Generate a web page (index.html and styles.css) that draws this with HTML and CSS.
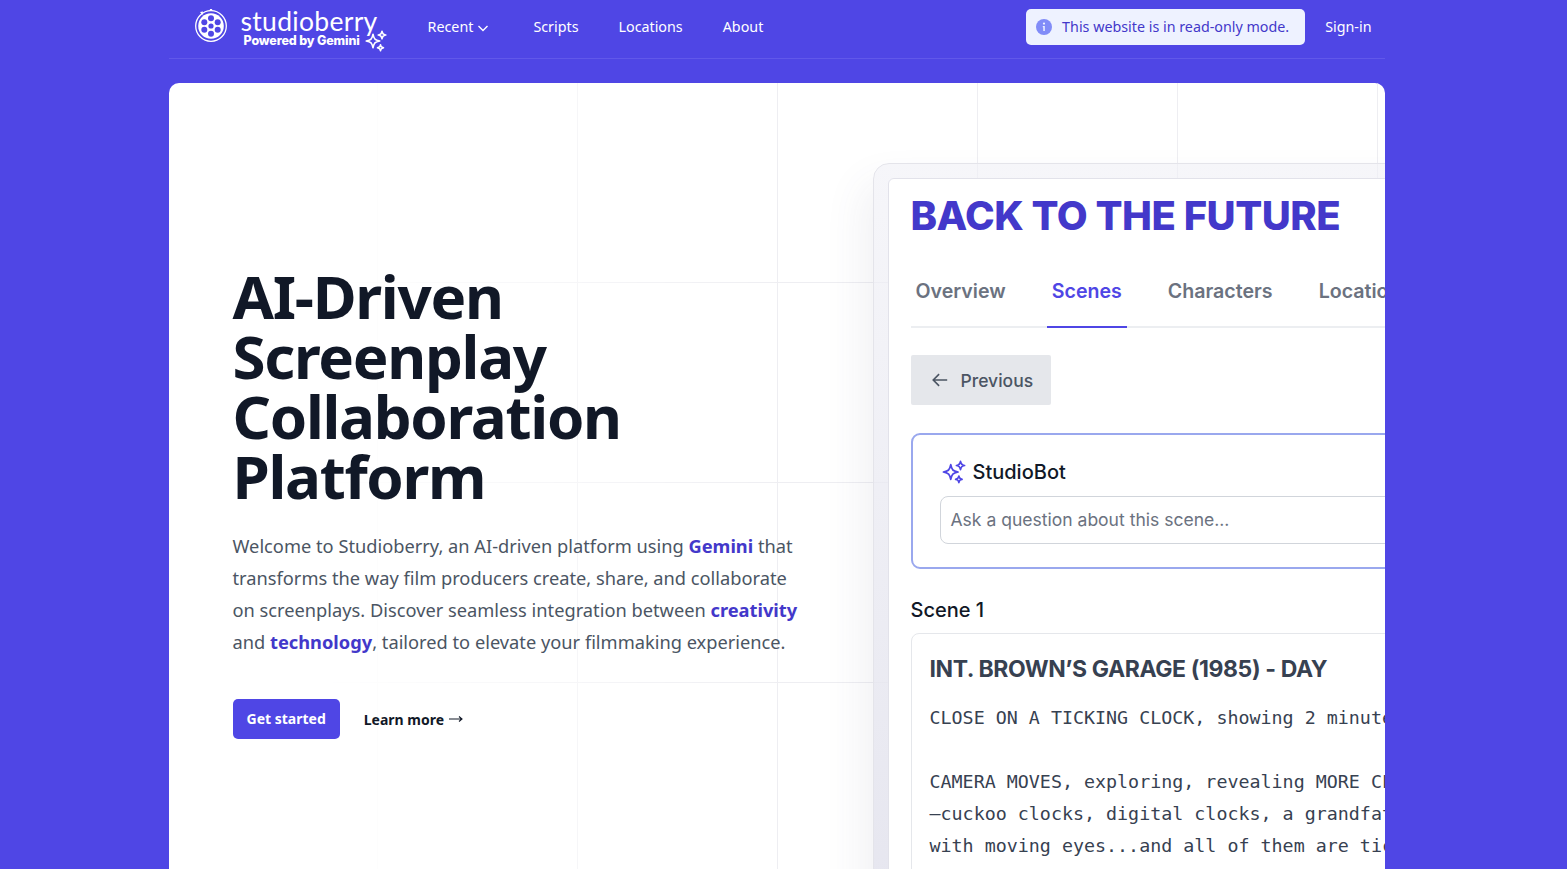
FILE: index.html
```html
<!DOCTYPE html>
<html lang="en">
<head>
  <meta charset="UTF-8">
  <meta name="viewport" content="width=device-width, initial-scale=1.0">
  <title>Studioberry</title>
  <link rel="stylesheet" href="styles.css">
</head>
<body>
  <svg class="defs" width="0" height="0" aria-hidden="true">
    <symbol id="sparkles" viewBox="0 0 24 24">
      <path fill="none" stroke="currentColor" stroke-width="1.6" stroke-linejoin="round" d="M9.813 15.904 9 18.75l-.813-2.846a4.5 4.5 0 0 0-3.09-3.09L2.25 12l2.846-.813a4.5 4.5 0 0 0 3.09-3.09L9 5.25l.813 2.846a4.5 4.5 0 0 0 3.09 3.09L15.75 12l-2.846.813a4.5 4.5 0 0 0-3.09 3.09Z"/>
      <path fill="none" stroke="currentColor" stroke-width="1.6" stroke-linejoin="round" d="M18.259 8.715 18 9.75l-.259-1.035a3.375 3.375 0 0 0-2.455-2.456L14.25 6l1.036-.259a3.375 3.375 0 0 0 2.455-2.456L18 2.25l.259 1.035a3.375 3.375 0 0 0 2.456 2.456L21.75 6l-1.035.259a3.375 3.375 0 0 0-2.456 2.456Z"/>
      <path fill="none" stroke="currentColor" stroke-width="1.6" stroke-linejoin="round" d="M16.894 20.567 16.5 21.75l-.394-1.183a2.25 2.25 0 0 0-1.423-1.423L13.5 18.75l1.183-.394a2.25 2.25 0 0 0 1.423-1.423l.394-1.183.394 1.183a2.25 2.25 0 0 0 1.423 1.423l1.183.394-1.183.394a2.25 2.25 0 0 0-1.423 1.423Z"/>
    </symbol>
  </svg>

  <div class="page">
    <!-- Header -->
    <header class="header">
      <a class="logo" href="#">
        <svg class="logo-reel" viewBox="0 0 32 32" fill="none">
          <circle cx="16" cy="16" r="15.300" stroke="white" stroke-width="1.300"/>
          <circle cx="16" cy="16" r="12.800" fill="white"/>
          <g fill="#4f46e5">
            <circle cx="16" cy="8.300" r="3"/>
            <circle cx="16" cy="23.700" r="3"/>
            <circle cx="9.300" cy="12.150" r="3"/>
            <circle cx="22.700" cy="12.150" r="3"/>
            <circle cx="9.300" cy="19.850" r="3"/>
            <circle cx="22.700" cy="19.850" r="3"/>
            <circle cx="16" cy="16" r="2.600"/>
          </g>
          <path d="M5 2 8 1.500 7.500 5Z M15 -1h2l.5 2h-3z" fill="white"/>
        </svg>
        <span class="logo-text">
          <span class="logo-name">studioberry</span>
          <span class="logo-sub">Powered by Gemini</span>
        </span>
        <svg class="logo-spark"><use href="#sparkles"/></svg>
      </a>

      <nav class="nav">
        <a href="#" class="nav-recent">Recent
          <svg class="chevron" viewBox="0 0 12 12" fill="none" stroke="white" stroke-width="1.4"><path d="M1.500 4 6 8.500 10.500 4"/></svg>
        </a>
        <a href="#">Scripts</a>
        <a href="#">Locations</a>
        <a href="#">About</a>
      </nav>

      <div class="notice">
        <svg class="notice-icon" viewBox="0 0 16 16">
          <circle cx="8" cy="8" r="8" fill="#818cf8"/>
          <circle cx="8" cy="4.600" r="1.100" fill="#eef2ff"/>
          <path d="M6.800 7h2v5h-1.500v-3.800h-.5z" fill="#eef2ff"/>
        </svg>
        This website is in read-only mode.
      </div>
      <a class="sign-in" href="#">Sign-in</a>
    </header>

    <!-- Hero card -->
    <main class="hero">
      <section class="intro">
        <h1>AI-Driven Screenplay Collaboration Platform</h1>
        <p>Welcome to Studioberry, an AI-driven platform using <b>Gemini</b> that transforms the way film producers create, share, and collaborate on screenplays. Discover seamless integration between <b>creativity</b> and <b>technology</b>, tailored to elevate your filmmaking experience.</p>
        <div class="actions">
          <a class="btn-primary" href="#">Get started</a>
          <a class="btn-link" href="#">Learn more
            <svg class="arrow" viewBox="0 0 14 10" fill="none" stroke="#111827" stroke-width="1.100"><path d="M0 5h13M10 2.500 13 5l-3 2.500"/></svg>
          </a>
        </div>
      </section>

      <!-- App preview -->
      <section class="preview">
        <div class="preview-inner">
          <h2 class="movie-title">BACK TO THE FUTURE</h2>
          <div class="tabs">
            <span class="tab">Overview</span>
            <span class="tab tab-active">Scenes</span>
            <span class="tab">Characters</span>
            <span class="tab">Locations</span>
          </div>
          <div class="prev-btn">
            <svg class="prev-arrow" viewBox="0 0 20 20" fill="none" stroke="#4b5563" stroke-width="1.800"><path d="M18 10H2.500M9 3.500 2.500 10 9 16.500"/></svg>
            Previous
          </div>
          <div class="bot">
            <div class="bot-title">
              <svg class="bot-spark"><use href="#sparkles"/></svg>
              StudioBot
            </div>
            <div class="bot-input">Ask a question about this scene...</div>
          </div>
          <div class="scene-label">Scene 1</div>
          <div class="scene">
            <h3>INT. BROWN’S GARAGE (1985) - DAY</h3>
            <pre>CLOSE ON A TICKING CLOCK, showing 2 minutes to eight.

CAMERA MOVES, exploring, revealing MORE CLOCKS
–cuckoo clocks, digital clocks, a grandfather clock
with moving eyes...and all of them are ticking.</pre>
          </div>
        </div>
      </section>
    </main>
  </div>
</body>
</html>
```

FILE: styles.css
```css
/* Basic styling for the page */
html, body {
  height: 100%;
  overflow: hidden;
}
body {
  margin: 0;
  padding-right: 14px;
  background-color: #4f46e5;
  font-family: "Noto Sans", "Open Sans", sans-serif;
  color: #111827;
}
a {
  text-decoration: none;
  color: inherit;
}
.defs {
  display: block;
  height: 0;
}
.page {
  width: 1216px;
  margin: 0 auto;
}

/* Header */
.header {
  display: flex;
  align-items: center;
  box-sizing: border-box;
  height: 59px;
  padding: 0 13px 5px 26px;
  border-bottom: 1px solid #6158ea;
  color: white;
  font-size: 14.3px;
}
.logo {
  display: flex;
  align-items: flex-start;
  width: 233px;
  height: 54px;
  position: relative;
}
.logo-reel {
  width: 32px;
  height: 32px;
  margin-top: 10px;
  overflow: visible;
}
.logo-text {
  display: flex;
  flex-direction: column;
  margin: 6px 0 0 14px;
}
.logo-name {
  font-family: Lato, sans-serif;
  font-size: 26.5px;
  line-height: 30px;
  letter-spacing: 0.3px;
}
.logo-sub {
  margin: -3px 0 0 3px;
  font-family: Inter, sans-serif;
  font-size: 12.5px;
  line-height: 15px;
  font-weight: 800;
  letter-spacing: -0.15px;
}
.logo-spark {
  position: absolute;
  left: 169px;
  top: 29px;
  width: 24px;
  height: 24px;
  color: white;
}
.nav {
  display: flex;
  gap: 40px;
}
.nav-recent {
  display: flex;
  align-items: center;
  gap: 4px;
  margin-right: 4px;
}
.chevron {
  width: 12px;
  height: 12px;
  margin-top: 2px;
}
.notice {
  display: flex;
  align-items: center;
  gap: 10px;
  margin-left: auto;
  height: 36px;
  padding: 0 16px 0 10px;
  background-color: #eef2ff;
  border-radius: 5px;
  color: #4338ca;
}
.notice-icon {
  width: 16px;
  height: 16px;
}
.sign-in {
  margin-left: 20px;
}

/* Hero card */
.hero {
  display: flex;
  position: relative;
  height: 1000px;
  margin-top: 24px;
  overflow: hidden;
  background-color: white;
  border-radius: 10px 10px 0 0;
}
/* grid lines behind the content, fading out to the left */
.hero::before {
  content: "";
  position: absolute;
  inset: 0;
  background-image:
    linear-gradient(to right, #eeeef2 1px, transparent 1px),
    linear-gradient(to bottom, #eeeef2 1px, transparent 1px);
  background-size: 200px 200px;
  background-position: 8px 0, 0 -1px;
  -webkit-mask-image: linear-gradient(to right, transparent 150px, black 620px);
  mask-image: linear-gradient(to right, transparent 150px, black 620px);
}
.intro {
  position: relative;
  flex: 0 0 704px;
  box-sizing: border-box;
  padding: 183px 64px 0 64px;
}
h1 {
  margin: 0;
  font-size: 60px;
  line-height: 60px;
  font-weight: 700;
  letter-spacing: -1.3px;
  color: #111827;
}
.intro p {
  margin: 24px 0 0;
  font-size: 18.25px;
  line-height: 32px;
  color: #4b5563;
}
.intro p b {
  font-weight: 700;
  color: #4338ca;
}
.actions {
  display: flex;
  align-items: center;
  gap: 24px;
  margin-top: 41px;
}
.btn-primary {
  padding: 0 14px;
  line-height: 40px;
  background-color: #4f46e5;
  border-radius: 5px;
  color: white;
  font-size: 14px;
  font-weight: 700;
}
.btn-link {
  display: flex;
  align-items: center;
  gap: 5px;
  font-size: 14px;
  font-weight: 700;
  color: #111827;
}
.arrow {
  width: 14px;
  height: 10px;
}

/* App preview */
.preview {
  position: relative;
  flex: 0 0 1000px;
  box-sizing: border-box;
  height: 900px;
  margin-top: 80px;
  padding: 14px;
  background: linear-gradient(to bottom, rgba(240, 240, 246, 0.6), rgba(225, 225, 236, 0.95));
  border: 1px solid #e4e4ea;
  border-radius: 16px;
  box-shadow: -10px 20px 40px rgba(80, 80, 110, 0.08);
}
.preview-inner {
  height: 100%;
  box-sizing: border-box;
  padding: 0 22px;
  background-color: white;
  border-radius: 6px;
  border: 1px solid #e2e2ea;
  font-family: Inter, sans-serif;
}
.movie-title {
  margin: 12px 0 0;
  font-size: 40px;
  line-height: 50px;
  font-weight: 800;
  letter-spacing: -0.5px;
  color: #4338ca;
}
.tabs {
  display: flex;
  width: 800px;
  height: 62px;
  margin-top: 23px;
  border-bottom: 2px solid #eceef1;
}
.tab {
  height: 62px;
  padding: 0 5px;
  margin-right: 36px;
  font-size: 19.6px;
  line-height: 54px;
  font-weight: 600;
  color: #6b7280;
}
.tab-active {
  color: #4f46e5;
  border-bottom: 2px solid #4f46e5;
}
.prev-btn {
  display: flex;
  width: fit-content;
  align-items: center;
  gap: 12px;
  height: 50px;
  margin-top: 27px;
  padding: 0 18px 0 20px;
  background-color: #e5e7eb;
  border-radius: 2px;
  font-size: 17.5px;
  font-weight: 500;
  color: #4b5563;
}
.prev-arrow {
  width: 18px;
  height: 18px;
}
.bot {
  box-sizing: border-box;
  height: 136px;
  margin-top: 28px;
  padding: 22px 27px;
  border: 2px solid #9aa8ee;
  border-radius: 9px;
}
.bot-title {
  display: flex;
  align-items: center;
  gap: 6px;
  height: 30px;
  padding-left: 1px;
  font-size: 20px;
  font-weight: 500;
  color: #111827;
}
.bot-spark {
  width: 26px;
  height: 26px;
  color: #4f46e5;
}
.bot-input {
  height: 48px;
  box-sizing: border-box;
  margin-top: 9px;
  padding-left: 10px;
  border: 1px solid #d1d5db;
  border-radius: 8px;
  font-size: 17.55px;
  line-height: 46px;
  color: #6b7280;
}
.scene-label {
  margin-top: 28px;
  font-size: 20px;
  line-height: 26px;
  font-weight: 500;
  color: #111827;
}
.scene {
  margin-top: 10px;
  padding: 19px 18px;
  border: 1px solid #e5e7eb;
  border-radius: 8px;
}
.scene h3 {
  margin: 0;
  font-size: 23px;
  line-height: 32px;
  font-weight: 700;
  letter-spacing: -0.4px;
  color: #374151;
}
.scene pre {
  margin: 17px 0 0;
  font-family: "DejaVu Sans Mono", monospace;
  font-size: 18.33px;
  line-height: 32px;
  color: #374151;
}
```
